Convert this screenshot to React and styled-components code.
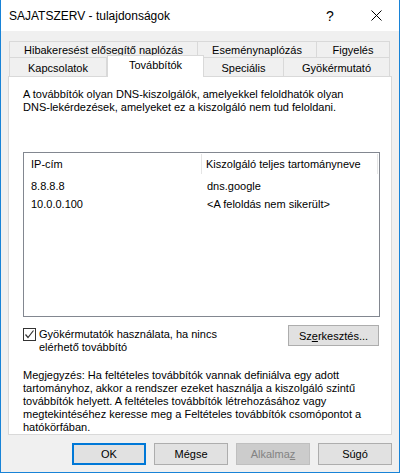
import React from 'react';
import styled, { createGlobalStyle } from 'styled-components';

const GlobalStyle = createGlobalStyle`
  html, body {
    margin: 0;
    padding: 0;
    background: #ffffff;
  }
  body {
    font-family: "Liberation Sans", Arial, sans-serif;
    font-size: 11px;
    color: #000;
  }
`;

const Window = styled.div`
  width: 400px;
  height: 473px;
  box-sizing: border-box;
  border: 1px solid #1883d7;
  border-top: none;
  background: #f0f0f0;
  display: flex;
  flex-direction: column;
`;

const TitleBar = styled.div`
  height: 31px;
  background: #ffffff;
  display: flex;
  align-items: center;
  padding-left: 8px;
`;

const Title = styled.div`
  flex: 1;
  font-size: 12px;
  font-family: "Liberation Sans", Arial, sans-serif;
  padding-top: 1px;
`;

const TitleButton = styled.div`
  width: 46px;
  height: 30px;
  display: flex;
  align-items: center;
  justify-content: center;
  font-size: 14px;
`;

const Body = styled.div`
  flex: 1;
  display: flex;
  flex-direction: column;
  padding-top: 10px;
`;

const TabStrip = styled.div`
  margin-left: 8px;
  width: 381px;
  display: flex;
  flex-direction: column;
`;

const TabRow = styled.div`
  display: flex;
  height: ${p => p.$h}px;
`;

const Tab = styled.div`
  box-sizing: border-box;
  width: ${p => p.$w}px;
  display: flex;
  align-items: center;
  justify-content: center;
  border: 1px solid #d9d9d9;
  border-left: ${p => (p.$first ? '1px solid #d9d9d9' : 'none')};
  border-bottom: none;
  background: #f0f0f0;
  white-space: nowrap;
  padding-top: 1px;
`;

const ActiveTab = styled(Tab)`
  background: #ffffff;
  border-left: 1px solid #d9d9d9;
  margin-top: -2px;
  height: calc(100% + 3px);
  margin-bottom: -1px;
  position: relative;
  z-index: 2;
  padding-top: 0;
  padding-bottom: 4px;
`;

const Panel = styled.div`
  margin-left: 7px;
  width: 384px;
  height: 359px;
  box-sizing: border-box;
  border: 1px solid #d9d9d9;
  background: #ffffff;
  padding: 11px 0 0 14px;
  display: flex;
  flex-direction: column;
  position: relative;
  z-index: 1;
`;

const Para = styled.p`
  margin: 0;
  line-height: 13px;
  width: ${p => p.$w || 340}px;
`;

const ListBox = styled.div`
  margin-top: 38px;
  width: 357px;
  height: 166px;
  box-sizing: border-box;
  border: 1px solid #828790;
  background: #ffffff;
`;

const ListHeader = styled.div`
  display: grid;
  grid-template-columns: 178px 176px;
  height: 24px;
`;

const HeaderCell = styled.div`
  display: flex;
  align-items: center;
  padding-left: 7px;
  border-right: 1px solid #e5e5e5;
  margin: 1px 0 3px 0;
  &:nth-child(2) {
    padding-left: 4px;
  }
`;

const ListRow = styled.div`
  display: grid;
  grid-template-columns: 178px 176px;
  height: 18px;
  align-items: center;
`;

const Cell = styled.div`
  padding-left: ${p => (p.$second ? 5 : 7)}px;
`;

const OptionRow = styled.div`
  margin-top: 8px;
  display: flex;
  justify-content: space-between;
  width: 356px;
`;

const CheckLabel = styled.div`
  display: flex;
  align-items: flex-start;
  padding-top: 3px;
`;

const CheckBox = styled.div`
  width: 13px;
  height: 13px;
  box-sizing: border-box;
  border: 1px solid #333333;
  background: #ffffff;
  margin-right: 3px;
  display: flex;
  align-items: center;
  justify-content: center;
`;

const CheckText = styled.div`
  line-height: 12.5px;
  margin-top: 0;
`;

const Button = styled.div`
  box-sizing: border-box;
  width: ${p => p.$w || 74}px;
  height: ${p => p.$h || 22}px;
  display: flex;
  align-items: center;
  justify-content: center;
  background: ${p => (p.$disabled ? '#cccccc' : '#e1e1e1')};
  border: ${p => (p.$default ? '2px solid #0078d7' : p.$disabled ? '1px solid #bfbfbf' : '1px solid #adadad')};
  color: ${p => (p.$disabled ? '#838383' : '#000')};
`;

const Key = styled.span`
  text-decoration: underline;
`;

const Note = styled(Para)`
  margin-top: 16px;
`;

const ButtonBar = styled.div`
  display: flex;
  justify-content: flex-end;
  gap: 8px;
  padding: 8px 7px 0 0;
`;

function CloseIcon() {
  return (
    <svg width="11" height="11" viewBox="0 0 11 11">
      <path d="M0.5 0.5 L10.5 10.5 M10.5 0.5 L0.5 10.5" stroke="#000" strokeWidth="1" />
    </svg>
  );
}

function CheckMark() {
  return (
    <svg width="11" height="11" viewBox="0 0 11 11">
      <path d="M1.5 5.5 L4 8.5 L9.5 1.5" fill="none" stroke="#333" strokeWidth="1.2" />
    </svg>
  );
}

const forwarders = [
  { ip: '8.8.8.8', name: 'dns.google' },
  { ip: '10.0.0.100', name: '<A feloldás nem sikerült>' },
];

export default function App() {
  return (
    <>
      <GlobalStyle />
      <Window>
        <TitleBar>
          <Title>SAJATSZERV - tulajdonságok</Title>
          <TitleButton>?</TitleButton>
          <TitleButton>
            <CloseIcon />
          </TitleButton>
        </TitleBar>
        <Body>
          <TabStrip>
            <TabRow $h={16}>
              <Tab $w={189} $first>Hibakeresést elősegítő naplózás</Tab>
              <Tab $w={119}>Eseménynaplózás</Tab>
              <Tab $w={73}>Figyelés</Tab>
            </TabRow>
            <TabRow $h={19}>
              <Tab $w={98} $first>Kapcsolatok</Tab>
              <ActiveTab $w={97}>Továbbítók</ActiveTab>
              <Tab $w={80}>Speciális</Tab>
              <Tab $w={106}>Gyökérmutató</Tab>
            </TabRow>
          </TabStrip>
          <Panel>
            <Para $w={330}>
              A továbbítók olyan DNS-kiszolgálók, amelyekkel feloldhatók olyan DNS-lekérdezések, amelyeket ez a kiszolgáló nem tud feloldani.
            </Para>
            <ListBox>
              <ListHeader>
                <HeaderCell>IP-cím</HeaderCell>
                <HeaderCell>Kiszolgáló teljes tartományneve</HeaderCell>
              </ListHeader>
              {forwarders.map(f => (
                <ListRow key={f.ip}>
                  <Cell>{f.ip}</Cell>
                  <Cell $second>{f.name}</Cell>
                </ListRow>
              ))}
            </ListBox>
            <OptionRow>
              <CheckLabel>
                <CheckBox>
                  <CheckMark />
                </CheckBox>
                <CheckText>
                  Gyökérmutatók használata, ha nincs
                  <br />
                  elérhető továbbító
                </CheckText>
              </CheckLabel>
              <Button $w={91} $h={21}>
                Sz<Key>e</Key>rkesztés...
              </Button>
            </OptionRow>
            <Note $w={345}>
              Megjegyzés: Ha feltételes továbbítók vannak definiálva egy adott tartományhoz, akkor a rendszer ezeket használja a kiszolgáló szintű továbbítók helyett. A feltételes továbbítók létrehozásához vagy megtekintéséhez keresse meg a Feltételes továbbítók csomópontot a hatókörfában.
            </Note>
          </Panel>
          <ButtonBar>
            <Button $default>OK</Button>
            <Button>Mégse</Button>
            <Button $disabled>
              Alkalma<Key>z</Key>
            </Button>
            <Button>Súgó</Button>
          </ButtonBar>
        </Body>
      </Window>
    </>
  );
}
